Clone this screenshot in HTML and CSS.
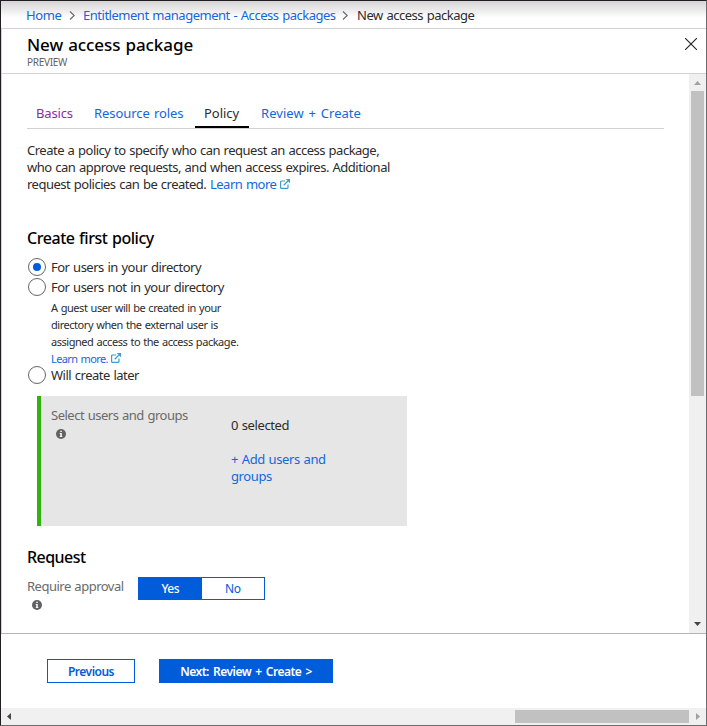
FILE: index.html
```html
<!DOCTYPE html>
<html lang="en">
<head>
<meta charset="utf-8">
<title>New access package</title>
<link rel="stylesheet" href="styles.css">
</head>
<body>
<svg class="defs" width="0" height="0">
  <symbol id="external" viewBox="0 0 10 10"><path d="M5 2H1.6a1 1 0 0 0-1 1v5.4a1 1 0 0 0 1 1H7a1 1 0 0 0 1-1V5.5M3.7 6.2L8 2" fill="none" stroke="#3a9ecb" stroke-width="1.2"/><path d="M5.8 0H10v4.2z" fill="#3a9ecb"/></symbol>
  <symbol id="info" viewBox="0 0 10 10"><circle cx="5" cy="5" r="5" fill="#626262"/><path d="M4.3 1.8h1.5v1.3H4.3zM3.7 4h2.1v3.2h.6v.9H3.7v-.9h.6V4.9h-.6z" fill="#fff"/></symbol>
  <symbol id="chevron" viewBox="0 0 6 9"><path d="M1 .5l4.2 4L1 8.5" fill="none" stroke="#666" stroke-width="1.1"/></symbol>
</svg>
<div class="window">
  <nav class="breadcrumb">
    <a class="crumb-home">Home</a><svg class="chevron"><use href="#chevron"/></svg>
    <a class="crumb-parent">Entitlement management - Access packages</a><svg class="chevron"><use href="#chevron"/></svg>
    <span>New access package</span>
  </nav>
  <header class="blade-header">
    <div>
      <h1>New access package</h1>
      <div class="preview">PREVIEW</div>
    </div>
    <svg class="close" viewBox="0 0 12 12"><path d="M0 0l12 12M12 0L0 12" stroke="#222" stroke-width="1.1"/></svg>
  </header>
  <div class="scroll-area">
    <main>
      <div class="tabs">
        <a class="tab visited">Basics</a>
        <a class="tab roles">Resource roles</a>
        <a class="tab active">Policy</a>
        <a class="tab review">Review + Create</a>
      </div>
      <p class="intro">Create a policy to specify who can request an access package,<br>who can approve requests, and when access expires. Additional<br>request policies can be created. <a>Learn more</a> <svg class="ext"><use href="#external"/></svg></p>
      <h2>Create first policy</h2>
      <div class="option"><span class="radio checked"></span><span>For users in your directory</span></div>
      <div class="option"><span class="radio"></span><span>For users not in your directory</span></div>
      <p class="hint">A guest user will be created in your<br>directory when the external user is<br>assigned access to the access package.<br><a>Learn more.</a> <svg class="ext"><use href="#external"/></svg></p>
      <div class="option"><span class="radio"></span><span>Will create later</span></div>
      <section class="picker">
        <div class="picker-label">Select users and groups<svg class="info"><use href="#info"/></svg></div>
        <div class="picker-value"><div>0 selected</div><a>+ Add users and<br>groups</a></div>
      </section>
      <h2 class="request">Request</h2>
      <div class="approval">
        <div class="approval-label">Require approval<svg class="info"><use href="#info"/></svg></div>
        <div class="toggle"><span class="on">Yes</span><span>No</span></div>
      </div>
    </main>
    <div class="vbar">
      <svg class="arrow up" viewBox="0 0 7 4"><path d="M3.5 0L7 4H0z" fill="#a0a0a0"/></svg>
      <div class="vthumb"></div>
      <svg class="arrow down" viewBox="0 0 7 4"><path d="M3.5 4L7 0H0z" fill="#454545"/></svg>
    </div>
  </div>
  <footer>
    <button class="previous">Previous</button>
    <button class="next">Next: Review + Create &gt;</button>
  </footer>
  <div class="hbar">
    <svg class="harrow" viewBox="0 0 4 7"><path d="M4 0v7L0 3.5z" fill="#454545"/></svg>
    <div class="hthumb"></div>
    <svg class="harrow" viewBox="0 0 4 7"><path d="M0 0v7l4-3.5z" fill="#a0a0a0"/></svg>
  </div>
</div>
</body>
</html>
```
FILE: styles.css
```css
* { box-sizing: border-box; }
body { margin: 0; font: 13px/17px "Noto Sans", sans-serif; letter-spacing: -0.5px; word-spacing: 0.75px; color: #2c2c2c; white-space: nowrap; }
a { color: #1366df; }
svg { display: block; flex: none; }
.defs { position: absolute; }
h1, h2, p { margin: 0; }
.window { display: flex; flex-direction: column; width: 707px; height: 726px; overflow: hidden; background: #fff; border: 1px solid #6c6c6e; border-top-color: #211d22; border-left-color: #211d22; }
.breadcrumb { display: flex; align-items: center; height: 28px; padding: 2px 0 0 25px; border-bottom: 1px solid #d2d2d2; background: linear-gradient(#d6d4d6, #fff 17px); letter-spacing: -0.48px; }
.crumb-home { width: 35px; letter-spacing: -0.35px; }
.crumb-parent { width: 253px; padding-left: 1px; }
.chevron { width: 6px; height: 9px; margin: 0 7px 0 8px; }
.crumb-parent + .chevron { margin: 0 9px 0 7px; }
.blade-header { display: flex; justify-content: space-between; height: 45px; padding: 5px 9px 0 25px; border-left: 1px solid #d2d2d2; border-bottom: 1px solid #d2d2d2; }
h1 { font-size: 17px; line-height: 22px; font-weight: 500; color: #000; letter-spacing: -0.08px; }
.preview { font-size: 10px; line-height: 12px; color: #626262; letter-spacing: -0.3px; }
.close { width: 12px; height: 12px; margin-top: 4px; }
.scroll-area { display: flex; height: 559px; border-left: 1px solid #d2d2d2; }
main { flex: 1; padding: 28px 0 0 25px; }
.tabs { display: flex; width: 637px; height: 27px; border-bottom: 1px solid #d2d2d2; letter-spacing: -0.05px; }
.tab { height: 26px; padding: 3px 0 0 9px; }
.visited { width: 58px; color: #8a2da5; letter-spacing: -0.15px; }
.roles { width: 110px; }
.active { width: 54px; color: #2c2c2c; border-bottom: 2px solid #000; }
.review { padding-left: 12px; letter-spacing: 0.04px; word-spacing: 1.4px; }
.intro { margin-top: 13px; }
.ext { display: inline-block; width: 10px; height: 10px; }
h2 { margin: 35px 0 9px; font-size: 16px; line-height: 20px; font-weight: 500; color: #000; letter-spacing: -0.45px; }
.option { display: flex; align-items: center; height: 20px; gap: 5px; padding-left: 1px; }
.radio { display: flex; align-items: center; justify-content: center; width: 18px; height: 18px; border: 1px solid #666; border-radius: 50%; }
.checked::before { content: ""; width: 8px; height: 8px; border-radius: 50%; background: #015cda; }
.hint { margin: 2px 0 -2px; padding-left: 24px; font-size: 11px; height: 68px; letter-spacing: -0.46px; }
.hint a { letter-spacing: -0.6px; }
.picker { display: flex; width: 370px; height: 130px; margin: 11px 0 0 10px; padding-left: 10px; background: #e6e6e6; border-left: 4px solid #30b30b; }
.picker-label { width: 180px; padding-top: 11px; color: #6a6a6a; }
.picker-value { padding-top: 21px; letter-spacing: -0.4px; }
.picker-value a { display: block; margin-top: 17px; }
.info { width: 10px; height: 10px; margin: 5px 0 0 5px; }
h2.request { margin: 21px 0 10px; letter-spacing: -0.55px; }
.approval { display: flex; }
.approval-label { width: 111px; padding-top: 1px; color: #6a6a6a; }
.toggle { display: flex; width: 127px; height: 23px; border: 1px solid #015cda; }
.toggle span { flex: 1; text-align: center; line-height: 22px; font-size: 12px; color: #015cda; }
.toggle .on { background: #015cda; color: #fff; font-weight: 500; }
.vbar { width: 17px; background: #f0f0f0; display: flex; flex-direction: column; align-items: center; }
.arrow { width: 7px; height: 4px; margin: 7px 0 6px; }
.vthumb { width: 13px; height: 305px; background: #c1c1c1; }
.arrow.down { margin: auto 0 7px; }
footer { display: flex; gap: 24px; height: 75px; padding: 25px 0 0 46px; border-top: 1px solid #b4b4b4; }
button { height: 24px; padding: 1px 0 0; border: 1px solid #015cda; font: 600 12px/20px "Noto Sans", sans-serif; letter-spacing: -0.5px; word-spacing: 1.5px; }
.previous { width: 88px; background: #fff; color: #015cda; }
.next { width: 174px; background: #015cda; color: #fff; }
.hbar { display: flex; align-items: center; height: 17px; background: #f0f0f0; padding: 0 6px 0 6px; }
.harrow { width: 4px; height: 7px; }
.hthumb { width: 174px; height: 13px; margin: 0 7px 0 auto; background: #c1c1c1; }
```
